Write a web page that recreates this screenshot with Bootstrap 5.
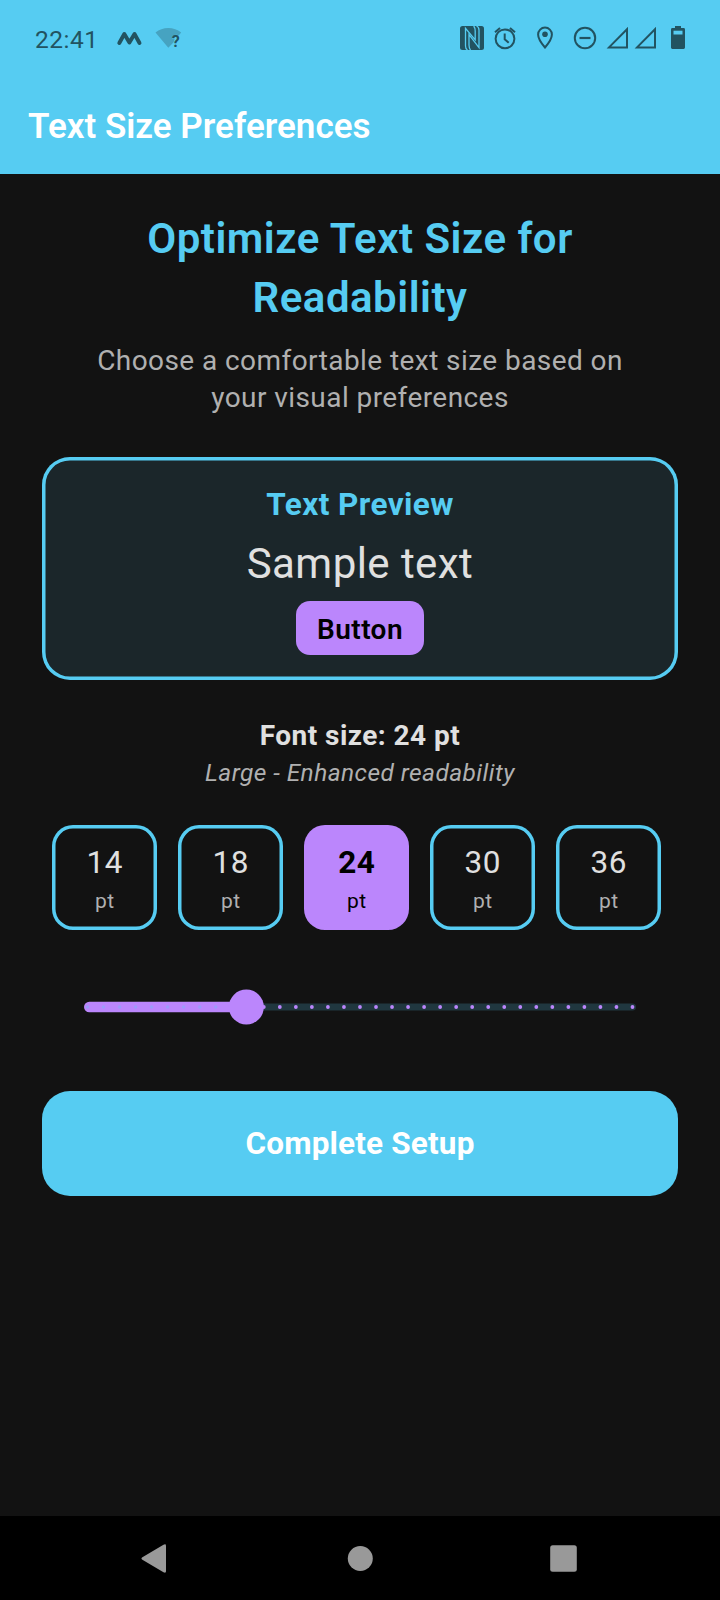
<!DOCTYPE html>
<html lang="en" data-bs-theme="dark">
<head>
<meta charset="utf-8">
<meta name="viewport" content="width=device-width, initial-scale=1">
<title>Text Size Preferences</title>
<link href="https://cdn.jsdelivr.net/npm/bootstrap@5.3.0/dist/css/bootstrap.min.css" rel="stylesheet">
<style>
  :root { --sky: #56ccf2; --violet: #bb86fc; --ink: #225361; }
  body { font-family: Roboto, "Liberation Sans", sans-serif; background: #121212; color: #e0e0e0; height: 1600px; overflow: hidden; }
  .topbar { background: var(--sky); height: 174px; }
  .status { height: 77px; }
  .clock { color: var(--ink); font-size: 24.5px; line-height: 29px; margin: 1px 0 0 35px; letter-spacing: .5px; }
  .app-title { font-size: 35px; line-height: 41px; font-weight: 600; margin: 29px 0 0 28px; color: #fff; }
  .content { padding: 35px 42px 0; }
  .headline { font-size: 42px; line-height: 59px; font-weight: 600; color: var(--sky); letter-spacing: .5px; }
  .intro { font-size: 28px; line-height: 37px; color: #b0b0b0; margin-top: 15px; letter-spacing: .43px; }
  .preview { height: 223px; margin-top: 41px; padding-top: 29px; box-shadow: inset 0 0 0 3.5px var(--sky); border-radius: 28px; background: #1b262a; }
  .preview-label { font-size: 31.5px; line-height: 37px; font-weight: 700; color: var(--sky); letter-spacing: .43px; }
  .sample { font-size: 42px; line-height: 49px; margin-top: 16px; letter-spacing: .45px; }
  .sample-btn { font-size: 28px; line-height: 55px; height: 54px; width: 128px; padding: 1px 0 0; margin-top: 13px; border: 0; border-radius: 14px; font-weight: 600; letter-spacing: .43px; }
  .sample-btn, .sample-btn:hover { background: var(--violet); color: #000; }
  .size-now { font-size: 28px; line-height: 33px; font-weight: 700; margin-top: 39px; letter-spacing: .45px; }
  .size-note { font-size: 24.5px; line-height: 29px; margin-top: 6px; color: #b0b0b0; letter-spacing: .43px; }
  .sizes { gap: 21px; margin: 38px 0 0 10.3px; }
  .size-tile { width: 105px; height: 105px; box-shadow: inset 0 0 0 3.5px var(--sky); border-radius: 21px; padding-top: 19px; }
  .size-tile b { font-size: 31.5px; line-height: 37px; font-weight: 400; letter-spacing: .5px; }
  .size-tile span { font-size: 21px; line-height: 25px; margin-top: 8px; color: #b0b0b0; letter-spacing: .5px; }
  .size-tile.active { background: var(--violet); box-shadow: none; color: #000; }
  .size-tile.active b { font-weight: 700; }
  .size-tile.active span { color: #000; }
  .slider { margin-top: 56px; height: 42px; }
  .setup-btn { height: 105px; margin-top: 63px; border: 0; border-radius: 28px; font-size: 31.5px; font-weight: 700; letter-spacing: .17px; }
  .setup-btn, .setup-btn:hover { background: var(--sky); color: #fff; }
  .sysnav { height: 84px; background: #000; }
  svg { display: block; }
</style>
</head>
<body class="d-flex flex-column">
<header class="topbar flex-shrink-0">
  <div class="status d-flex align-items-center">
    <div class="clock">22:41</div>
    <svg class="ms-auto" width="610" height="77" viewBox="110 0 610 77" fill="none" stroke="#225361">
      <path d="M119.300 43l5-9 5.100 8.500 5.100-8.500 5 9" stroke-width="3.900" stroke-linecap="round" stroke-linejoin="round"/>
      <path d="M168.300 47.800L155.500 32.600Q161 28 168.300 28t12.900 4.600l-2.400 2.800q-5-2-7 3.600h2.800l-1 3.200z" fill="#46a3c1" stroke="none"/>
      <text x="171.800" y="47" font-size="16" font-weight="700" fill="#225361" stroke="none">?</text>
      <rect x="460" y="26" width="24" height="24" rx="2.500" fill="#225361" stroke="none"/>
      <path d="M467.500 50q-2-1-2-4V28.300l9.700 11.500V31q0-3-1.500-5M476.500 26q2.500 1 2.500 4v17.700l-10-13V45q0 3 1.500 5" stroke="#56ccf2" stroke-width="1.300"/>
      <circle cx="505" cy="38.800" r="9.400" stroke-width="2"/>
      <path d="M504.700 33.500v5.800l4 3.500M495 32.200l5-4.300M515 32.200l-5-4.300" stroke-width="2"/>
      <path d="M545 47.500q-6.900-8-6.900-13a6.900 6.900 0 0 1 13.800 0q0 5-6.900 13z" stroke-width="2"/>
      <circle cx="545" cy="34.300" r="2.800" fill="#225361" stroke="none"/>
      <circle cx="585" cy="38" r="10.200" stroke-width="2"/>
      <path d="M579.500 38h11" stroke-width="2.200"/>
      <path d="M609 47.400h18V29.200zM637 47.400h18V29.200z" stroke-width="2"/>
      <path d="M675 26h6v2h2.600q1.400 0 1.400 1.400v18.200q0 1.400-1.400 1.400h-11.200q-1.400 0-1.400-1.400V29.400q0-1.400 1.400-1.400h2.600z" fill="#225361" stroke="none"/>
      <path d="M673.500 30.700h9v3.800h-9z" fill="#56ccf2" stroke="none"/>
    </svg>
  </div>
  <h1 class="app-title">Text Size Preferences</h1>
</header>
<main class="content flex-grow-1 text-center">
  <h2 class="headline mb-0">Optimize Text Size for<br>Readability</h2>
  <p class="intro mb-0">Choose a comfortable text size based on<br>your visual preferences</p>
  <section class="preview d-flex flex-column align-items-center">
    <div class="preview-label">Text Preview</div>
    <div class="sample">Sample text</div>
    <button class="btn sample-btn">Button</button>
  </section>
  <div class="size-now">Font size: 24 pt</div>
  <div class="size-note fst-italic">Large - Enhanced readability</div>
  <div class="sizes d-flex">
    <div class="size-tile d-flex flex-column"><b>14</b><span>pt</span></div>
    <div class="size-tile d-flex flex-column"><b>18</b><span>pt</span></div>
    <div class="size-tile d-flex flex-column active"><b>24</b><span>pt</span></div>
    <div class="size-tile d-flex flex-column"><b>30</b><span>pt</span></div>
    <div class="size-tile d-flex flex-column"><b>36</b><span>pt</span></div>
  </div>
  <svg class="slider" width="636" viewBox="42 986 636 42">
    <rect x="240" y="1003.500" width="396" height="7" rx="3.500" fill="#20373f"/>
    <rect x="84" y="1001.700" width="165" height="10.600" rx="5.300" fill="#bb86fc"/>
    <path d="M87.500 1007H248" stroke="#56ccf2" stroke-opacity=".3" stroke-width="3.500" stroke-linecap="round" stroke-dasharray="0 16.030"/>
    <path d="M263.800 1007H633.500" stroke="#bb86fc" stroke-width="3.800" stroke-linecap="round" stroke-dasharray="0 16.030"/>
    <circle cx="246.350" cy="1007" r="17.500" fill="#bb86fc"/>
  </svg>
  <button class="btn setup-btn w-100">Complete Setup</button>
</main>
<footer class="sysnav flex-shrink-0">
  <svg width="720" height="84" viewBox="0 1516 720 84" fill="#999">
    <path d="M142 1557.500L163.500 1544.700q2.500-1.200 2.500 1v25.600q0 2.200-2.500 1L142 1559.500q-1.300-1 0-2z"/>
    <circle cx="360.300" cy="1558.500" r="12.500"/>
    <rect x="550.200" y="1545.200" width="26.600" height="26.600" rx="2.500"/>
  </svg>
</footer>
<script src="https://cdn.jsdelivr.net/npm/bootstrap@5.3.0/dist/js/bootstrap.bundle.min.js"></script>
</body>
</html>
